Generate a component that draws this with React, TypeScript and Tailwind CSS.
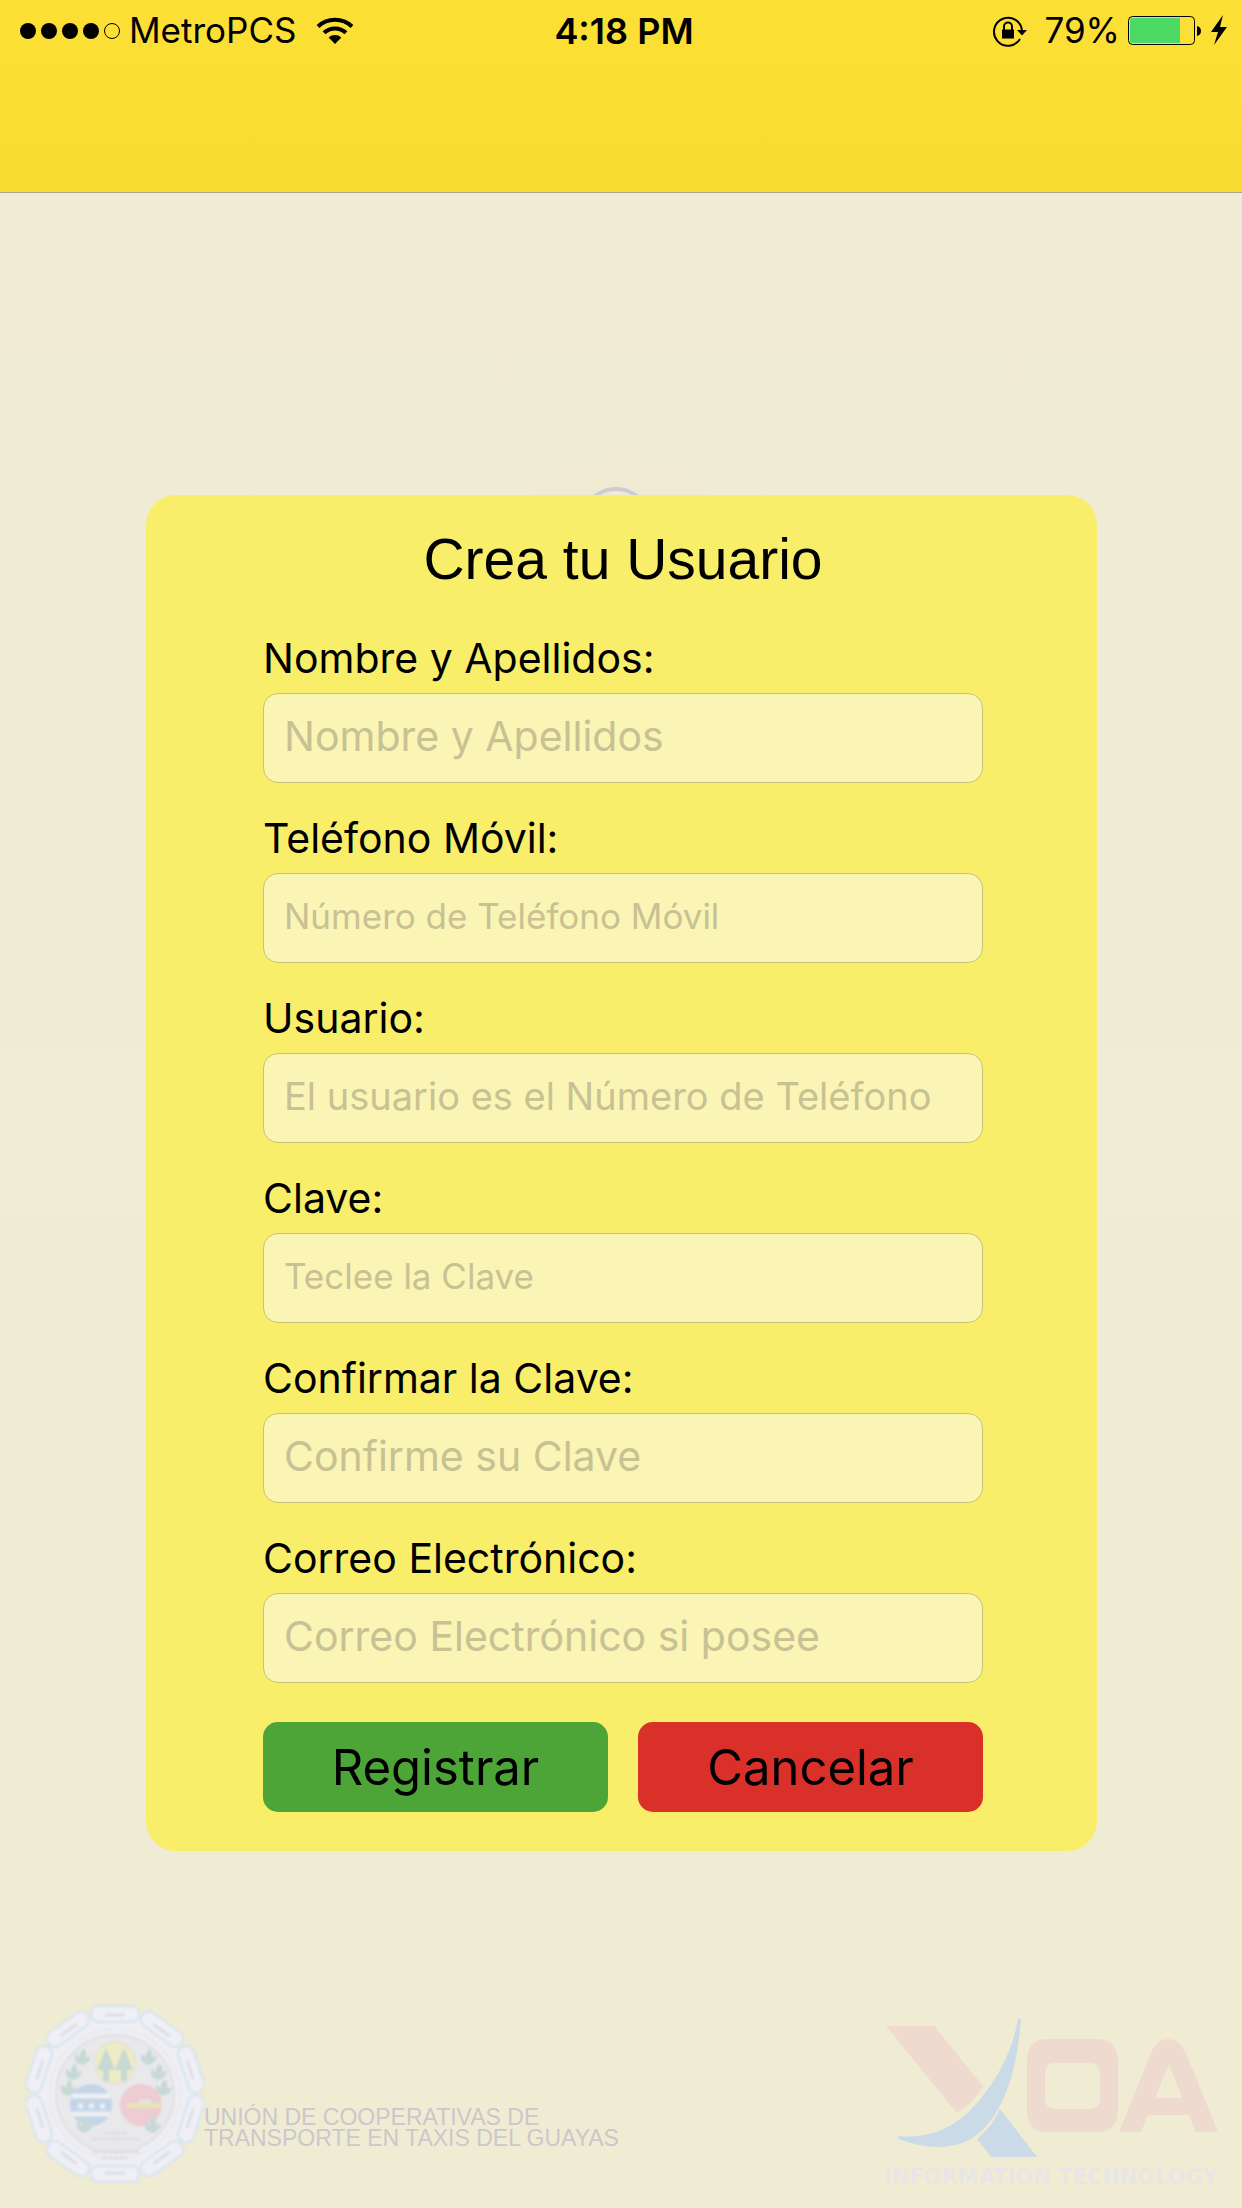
import React from "react";

type Field = { id: string; label: string; placeholder: string; type: string; size: string };

const fields: Field[] = [
  { id: "nombre", label: "Nombre y Apellidos:", placeholder: "Nombre y Apellidos", type: "text", size: "text-[41px]" },
  { id: "telefono", label: "Teléfono Móvil:", placeholder: "Número de Teléfono Móvil", type: "tel", size: "text-[35px]" },
  { id: "usuario", label: "Usuario:", placeholder: "El usuario es el Número de Teléfono", type: "text", size: "text-[38px]" },
  { id: "clave", label: "Clave:", placeholder: "Teclee la Clave", type: "password", size: "text-[35px]" },
  { id: "confirmar", label: "Confirmar la Clave:", placeholder: "Confirme su Clave", type: "password", size: "text-[41px]" },
  { id: "correo", label: "Correo Electrónico:", placeholder: "Correo Electrónico si posee", type: "email", size: "text-[41px]" },
];

function WifiIcon() {
  return (
    <svg width="38" height="28" viewBox="0 0 38 28" aria-hidden="true">
      <g fill="none" stroke="#000" strokeWidth="4">
        <path d="M2 9.500A25 25 0 0 1 36 9.500" />
        <path d="M8 15.800A16 16 0 0 1 30 15.800" />
      </g>
      <path d="M12.600 20.500A9.500 9.500 0 0 1 25.400 20.500L19 27Z" />
    </svg>
  );
}

function RotationLockIcon() {
  return (
    <svg width="36" height="32" viewBox="0 0 36 32" aria-hidden="true">
      <path d="M28 24A14 14 0 1 1 30 16" fill="none" stroke="#000" strokeWidth="2" />
      <path d="M25 15H35L30 20.500Z" />
      <rect x="10" y="14.500" width="12" height="9" />
      <path d="M12 15V11.500A4 4 0 0 1 20 11.500V15" fill="none" stroke="#000" strokeWidth="2" />
    </svg>
  );
}

function BatteryIcon() {
  return (
    <svg width="100" height="32" viewBox="0 0 100 32" aria-hidden="true">
      <rect x="0.500" y="1.500" width="66" height="28" rx="4" fill="none" stroke="#000" />
      <path d="M4 3H52V28H4Q2 28 2 26V5Q2 3 4 3Z" fill="#4cd964" />
      <path d="M69 11Q73 12 73 16T69 21Z" />
      <path d="M95 0L83 17H90L86 30L99 12H92Z" />
    </svg>
  );
}

function StatusBar() {
  return (
    <div className="grid grid-cols-[1fr_auto_1fr] items-center h-[61px] pl-5 pr-[14px] text-[35px] leading-none">
      <div className="flex items-center">
        <div className="flex gap-[5px]" aria-label="Señal">
          <span className="size-4 rounded-full bg-black" />
          <span className="size-4 rounded-full bg-black" />
          <span className="size-4 rounded-full bg-black" />
          <span className="size-4 rounded-full bg-black" />
          <span className="size-4 rounded-full border border-black" />
        </div>
        <span className="ml-[9px] mr-5">MetroPCS</span>
        <WifiIcon />
      </div>
      <span className="text-[36px] font-semibold">4:18 PM</span>
      <div className="flex items-center justify-end">
        <RotationLockIcon />
        <span className="ml-4 mr-2">79%</span>
        <BatteryIcon />
      </div>
    </div>
  );
}

const plates = [0, 36, 72, 108, 144, 180, 216, 252, 288, 324];

function Leaf({ x, y }: { x: number; y: number }) {
  return (
    <path
      transform={`translate(${x} ${y})`}
      d="M-6 6Q-8 1-7-3Q-4 0-3 2Q-2-4 2-8Q5-3 4 2Q6 0 9 0Q7 8 0 9Z"
    />
  );
}

function UnionSeal() {
  return (
    <svg className="shrink-0 mb-[6px] blur-[1px]" width="178" height="182" viewBox="0 0 178 182" aria-label="Escudo" role="img">
      <circle cx="89" cy="91" r="79" fill="#efeff3" />
      <circle cx="89" cy="91" r="59" fill="#e9e9ec" stroke="#dfe0e6" strokeWidth="2" />
      <circle cx="89" cy="91" r="65" fill="none" stroke="#e2e2e8" strokeWidth="2" strokeDasharray="2 3" />
      {plates.map((angle) => (
        <g key={angle} transform={`rotate(${angle} 89 91)`}>
          <rect x="65" y="3" width="48" height="16" rx="7" fill="#efeff5" stroke="#d5e4f0" strokeWidth="2" />
          <path d="M79 12H99" stroke="#dedee4" strokeWidth="3" />
        </g>
      ))}
      <circle cx="89" cy="60" r="21" fill="#eeebc5" stroke="#dededb" />
      <g fill="#c7d9d4">
        <path d="M80 45L89 67H83V78H77V67H71Z" />
        <path d="M98 45L107 67H101V78H95V67H89Z" />
        <Leaf x={56} y={53} />
        <Leaf x={47} y={68} />
        <Leaf x={42} y={84} />
        <Leaf x={122} y={53} />
        <Leaf x={132} y={68} />
        <Leaf x={137} y={84} />
      </g>
      <circle cx="65" cy="102" r="21" fill="#c3d5e8" />
      <path d="M46 93H84M46 111H84" stroke="#edf0f3" strokeWidth="5" />
      <path d="M52 103H79" stroke="#edf0f3" strokeWidth="5" strokeDasharray="5 6" />
      <circle cx="115" cy="102" r="21" fill="#edccd3" />
      <path d="M101 100H112L114 96H124L127 100H136V105H101Z" fill="#e8e4b5" />
      <path d="M113 97H125V101H113Z" fill="#e6e2e5" />
      <g fill="#c7d9d4">
        <Leaf x={58} y={121} />
        <Leaf x={126} y={121} />
      </g>
      <path d="M78 130H102M66 136H114M66 149H114M76 155H102" stroke="#dddde3" strokeWidth="3" strokeDasharray="5 1" />
    </svg>
  );
}

function XoaLogo() {
  return (
    <svg className="shrink-0" width="342" height="172" viewBox="0 0 342 172" role="img" aria-label="XOA Information Technology">
      <g fill="#efdacf">
        <path d="M2 7H50L99 67Q90 84 73 94Z" />
        <path fillRule="evenodd" d="M160 20H216Q233 21 234 42V92Q233 112 216 113H160Q144 112 143 92V42Q144 21 160 20ZM172 44Q161 44 161 55V79Q161 90 172 90H205Q216 90 216 79V55Q216 44 205 44Z" />
        <path fillRule="evenodd" d="M235 113L267 34Q273 20 284 20T302 34L334 113H312L305 96H264L257 113ZM271 79H298L285 45Z" />
      </g>
      <g fill="#cadbe7">
        <path d="M134 0H137C132 67 112 108 83 122Q54 135 14 120V117Q61 122 94 83Q126 45 134 0Z" />
        <path d="M116 90L153 138H107L93 120Q107 109 116 90Z" />
      </g>
      <text x="0" y="165" fontSize="21" fontWeight="700" fill="#e7e6e4" fontFamily="DejaVu Sans, sans-serif">
        INFORMATION TECHNOLOGY
      </text>
    </svg>
  );
}

export default function App() {
  return (
    <div className="relative flex flex-col min-h-screen bg-linear-to-b from-[#f1ebd6] to-[#f0ecd3] text-black font-[Inter,sans-serif]">
      <header className="h-[193px] border-b border-[#aaa68c] bg-linear-to-b from-[#fde035] to-[#f8dc31]">
        <StatusBar />
      </header>

      <main className="flex flex-col items-center pt-[302px] pl-[146px] pr-[145px]">
        <div className="relative w-full">
          <svg className="absolute left-1/2 -translate-x-1/2 -top-[35px]" width="240" height="35" viewBox="0 0 240 35" aria-hidden="true">
            <circle cx="118" cy="127" r="126" fill="#f1e9d1" />
            <circle cx="114" cy="48" r="33" fill="#eeebd2" />
            <circle cx="114" cy="63" r="34" fill="none" stroke="#cdccd2" strokeWidth="4" />
          </svg>
          <form className="w-full rounded-[30px] bg-[#f9ee69] pt-[31px] pb-[39px] pl-[117px] pr-[114px]" onSubmit={(e) => e.preventDefault()}>
            <h1 className="text-center text-[57px] leading-[66px] font-[Liberation_Sans,Arial,sans-serif]">Crea tu Usuario</h1>
            <div className="flex flex-col gap-[30px] pt-[41px]">
              {fields.map((f) => (
                <div key={f.id} className="flex flex-col">
                  <label htmlFor={f.id} className="text-[41px] leading-[50px] pb-[10px]">
                    {f.label}
                  </label>
                  <input
                    id={f.id}
                    type={f.type}
                    placeholder={f.placeholder}
                    className={`h-[90px] w-full rounded-[15px] border border-[#cbc279] bg-[#faf4b5] px-5 pb-1 outline-none placeholder:text-[#c8c194] ${f.size}`}
                  />
                </div>
              ))}
            </div>
            <div className="grid grid-cols-2 gap-[30px] pt-[39px] text-[49px] leading-none">
              <button type="submit" className="h-[90px] rounded-[15px] bg-[#4da437]">Registrar</button>
              <button type="button" className="h-[90px] rounded-[15px] bg-[#d93029]">Cancelar</button>
            </div>
          </form>
        </div>
      </main>

      <footer className="mt-auto flex items-end justify-between pl-[26px] pr-[16px] pb-[17px]">
        <div className="flex items-end">
          <UnionSeal />
          <p className="pb-[42px] text-[23px] leading-[21px] text-[#c9c8cc] font-[Liberation_Sans,Arial,sans-serif]">
            UNIÓN DE COOPERATIVAS DE
            <br />
            TRANSPORTE EN TAXIS DEL GUAYAS
          </p>
        </div>
        <XoaLogo />
      </footer>
    </div>
  );
}
